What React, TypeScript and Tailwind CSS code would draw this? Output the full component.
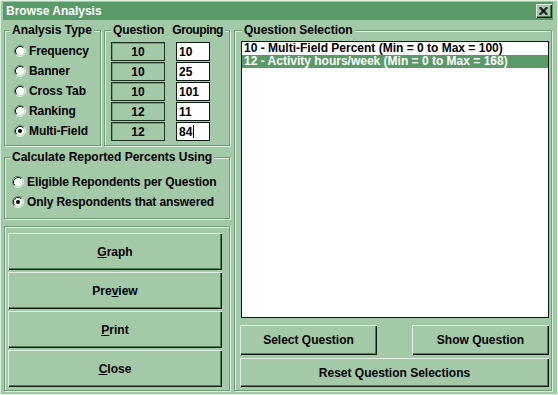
import React from "react";

const FONT = { fontFamily: '"Liberation Sans", Arial, sans-serif' };

function Radio({ checked }: { checked?: boolean }) {
  return (
    <svg width="12" height="12" viewBox="0 0 12 12" className="shrink-0">
      <circle cx="6" cy="6" r="4.5" fill="#ffffff" />
      <path d="M2.11 9.89 A5.5 5.5 0 0 1 9.89 2.11" stroke="#5B8A63" strokeWidth="1" fill="none" />
      <path d="M9.89 2.11 A5.5 5.5 0 0 1 2.11 9.89" stroke="#E4F2E5" strokeWidth="1" fill="none" />
      <path d="M2.82 9.18 A4.5 4.5 0 0 1 9.18 2.82" stroke="#111a12" strokeWidth="1" fill="none" />
      <path d="M9.18 2.82 A4.5 4.5 0 0 1 2.82 9.18" stroke="#C8DFCB" strokeWidth="1" fill="none" />
      {checked && <circle cx="6" cy="6" r="2" fill="#000000" />}
    </svg>
  );
}

function RadioRow({ label, checked, pad }: { label: string; checked?: boolean; pad: string }) {
  return (
    <div className={"flex h-[20px] items-center gap-[3px] " + pad}>
      <Radio checked={checked} />
      <span className="text-[12px] font-bold leading-[14px] tracking-[-0.1px] text-black">{label}</span>
    </div>
  );
}

function Btn({ children, className }: { children: React.ReactNode; className: string }) {
  return (
    <div
      className={
        "flex items-center justify-center bg-[#A3C9A8] text-[12px] font-bold leading-[14px] text-black shadow-[inset_1px_1px_0_#E2F1E3,inset_-1px_-1px_0_#0F1A10,inset_-2px_-2px_0_#4F7F57] " +
        className
      }
    >
      {children}
    </div>
  );
}

const groupCls =
  "border border-[#6F9E77] shadow-[inset_1px_1px_0_#DDEFDF,1px_1px_0_#DDEFDF]";

export default function App() {
  const rows = [
    ["10", "10"],
    ["10", "25"],
    ["10", "101"],
    ["12", "11"],
    ["12", "84"],
  ];
  return (
    <div
      style={FONT}
      className="flex h-[395px] w-[558px] flex-col overflow-hidden border border-[#DDEFDF] bg-[#A3C9A8] pl-[2px] pr-[4px] pt-[1px]"
    >
      {/* Title bar */}
      <div className="flex h-[18px] w-[550px] shrink-0 items-center justify-between bg-[#5A9A68] pl-[3px] pr-[1px]">
        <span className="text-[12px] font-bold leading-[14px] text-white">Browse Analysis</span>
        <div className="flex h-[14px] w-[16px] items-center justify-center bg-[#A3C9A8] shadow-[inset_1px_1px_0_#E2F1E3,inset_-1px_-1px_0_#0F1A10,inset_-2px_-2px_0_#4F7F57]">
          <svg width="9" height="8" viewBox="0 0 9 8" className="mb-[1px] mr-[1px]">
            <path d="M0.5 0 L8.5 8 M1.5 0 L8.5 7 M0.5 1 L7.5 8 M8.5 0 L0.5 8 M7.5 0 L0.5 7 M8.5 1 L1.5 8" stroke="#000" strokeWidth="1" />
          </svg>
        </div>
      </div>

      {/* Body */}
      <div className="flex gap-[4px] pl-[1px] pt-[3px]">
        {/* Left column */}
        <div className="flex w-[226px] flex-col">
          <div className="flex gap-[3px]">
            <fieldset className={"h-[123px] w-[97px] " + groupCls}>
              <legend className="ml-[5px] bg-[#A3C9A8] px-[2px] text-[12px] font-bold leading-[14px] text-black">
                Analysis Type
              </legend>
              <div className="flex flex-col pt-[4px]">
                <RadioRow pad="pl-[9px]" label="Frequency" />
                <RadioRow pad="pl-[9px]" label="Banner" />
                <RadioRow pad="pl-[9px]" label="Cross Tab" />
                <RadioRow pad="pl-[9px]" label="Ranking" />
                <RadioRow pad="pl-[9px]" label="Multi-Field" checked />
              </div>
            </fieldset>
            <fieldset className={"h-[123px] w-[126px] " + groupCls}>
              <legend className="ml-[6px] flex gap-[8px] bg-[#A3C9A8] px-[2px] text-[12px] font-bold leading-[14px] text-black">
                <span className="tracking-[-0.1px]">Question</span>
                <span className="tracking-[-0.4px]">Grouping</span>
              </legend>
              <div className="flex flex-col gap-[1px] pl-[6px] pt-[5px]">
                {rows.map(([q, g], i) => (
                  <div key={i} className="flex h-[19px] gap-[11px]">
                    <div className="flex w-[54px] items-center justify-center border border-[#1E3322] bg-[#A3C9A8] text-[12px] font-bold leading-[14px] text-black shadow-[inset_1px_1px_0_#6F9E77]">
                      {q}
                    </div>
                    <div className="flex w-[34px] items-center border border-[#0F1A10] bg-white pl-[2px] text-[12px] font-bold leading-[14px] text-black">
                      <span>{g}</span>
                      {i === 4 && <span className="ml-[1px] inline-block h-[13px] w-[1px] bg-black" />}
                    </div>
                  </div>
                ))}
              </div>
            </fieldset>
          </div>

          <fieldset className={"mt-[4px] h-[69px] w-[226px] " + groupCls}>
            <legend className="ml-[5px] bg-[#A3C9A8] px-[2px] text-[12px] font-bold leading-[14px] text-black">
              Calculate Reported Percents Using
            </legend>
            <div className="flex flex-col pt-[8px]">
              <RadioRow pad="pl-[7px]" label="Eligible Repondents per Question" />
              <RadioRow pad="pl-[7px]" label="Only Respondents that answered" checked />
            </div>
          </fieldset>

          <div className={"mt-[7px] flex h-[165px] w-[226px] flex-col gap-[2px] pl-[3px] pt-[6px] " + groupCls}>
            <Btn className="h-[37px] w-[214px]">
              <span><u>G</u>raph</span>
            </Btn>
            <Btn className="h-[37px] w-[214px]">
              <span>Pre<u>v</u>iew</span>
            </Btn>
            <Btn className="h-[37px] w-[214px]">
              <span><u>P</u>rint</span>
            </Btn>
            <Btn className="h-[37px] w-[214px]">
              <span><u>C</u>lose</span>
            </Btn>
          </div>
        </div>

        {/* Right column */}
        <fieldset className={"h-[368px] w-[318px] " + groupCls}>
          <legend className="ml-[7px] bg-[#A3C9A8] px-[2px] text-[12px] font-bold leading-[14px] text-black">
            Question Selection
          </legend>
          <div className="flex flex-col pl-[5px] pt-[4px]">
            <div className="ml-[1px] h-[277px] w-[308px] border border-[#0F1A10] bg-white">
              <div className="h-[13px] pl-[2px] text-[12px] font-bold leading-[13px] text-black">
                10 - Multi-Field Percent (Min = 0 to Max = 100)
              </div>
              <div className="h-[13px] bg-[#5A9A68] pl-[2px] text-[12px] font-bold leading-[13px] text-white">
                12 - Activity hours/week (Min = 0 to Max = 168)
              </div>
            </div>
            <div className="mt-[7px] flex justify-between pr-[2px]">
              <Btn className="h-[30px] w-[137px]">Select Question</Btn>
              <Btn className="h-[30px] w-[137px]">Show Question</Btn>
            </div>
            <Btn className="mt-[3px] h-[29px] w-[309px]">Reset Question Selections</Btn>
          </div>
        </fieldset>
      </div>
    </div>
  );
}
